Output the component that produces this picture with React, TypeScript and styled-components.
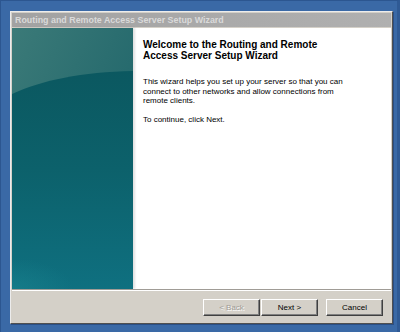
import React from 'react';
import styled, { createGlobalStyle } from 'styled-components';

const GlobalStyle = createGlobalStyle`
  html, body {
    margin: 0;
    padding: 0;
    background: #3a69a6;
  }
  * {
    box-sizing: border-box;
  }
`;

const Desktop = styled.div`
  width: 400px;
  height: 332px;
  padding: 10px 0 0 9px;
  background: #3a69a6;
  border-top: 1px solid #2c5690;
  border-left: 1px solid #2c5690;
  border-right: 3px solid #2f5a95;
  overflow: hidden;
`;

const Window = styled.div`
  width: 383px;
  height: 313px;
  display: flex;
  flex-direction: column;
  background: #d4d0c8;
  border-top: 1px solid #ececec;
  border-left: 1px solid #ececec;
  border-right: 1px solid #505050;
  border-bottom: 1px solid #505050;
  padding: 1px;
  box-shadow: 1px 1px 0 #2a4f86;
`;

const TitleBar = styled.div`
  height: 14px;
  flex-shrink: 0;
  display: flex;
  align-items: center;
  padding-left: 3px;
  background: linear-gradient(to right, #a2a2a2, #b0b0b0);
  color: #dadada;
  font-family: 'Liberation Sans', Arial, sans-serif;
  font-weight: bold;
  font-size: 8.9px;
  white-space: nowrap;
`;

const Main = styled.div`
  height: 261px;
  flex-shrink: 0;
  display: flex;
  background: #ffffff;
  margin-top: 1px;
`;

const Side = styled.div`
  width: 121px;
  flex-shrink: 0;
  overflow: hidden;
  box-shadow: 2px 0 2px rgba(0, 0, 0, 0.12);
`;

const Art = styled.svg`
  display: block;
  width: 121px;
  height: 261px;
`;

const Content = styled.div`
  flex: 1;
  padding: 11px 10px 0 10px;
  font-family: 'Liberation Sans', Arial, sans-serif;
  color: #000;
`;

const Heading = styled.h1`
  margin: 0 0 16px 0;
  font-size: 10px;
  line-height: 11px;
  font-weight: bold;
`;

const Para = styled.p`
  margin: 0 0 9px 0;
  font-size: 8px;
  line-height: 9.7px;
`;

const Separator = styled.div`
  height: 2px;
  flex-shrink: 0;
  border-top: 1px solid #a09c96;
  border-bottom: 1px solid #ffffff;
`;

const Footer = styled.div`
  flex: 1;
  display: flex;
  align-items: flex-start;
  justify-content: flex-end;
  padding: 8px 8px 0 0;
`;

const ButtonGroup = styled.div<{ $gap: number }>`
  display: flex;
  gap: ${(p) => p.$gap}px;
  margin-left: 8px;
`;

const Button = styled.button<{ $disabled?: boolean }>`
  width: 57px;
  height: 17px;
  padding: 0;
  background: #d4d0c8;
  border-top: 1px solid #ffffff;
  border-left: 1px solid #ffffff;
  border-right: 1px solid #404040;
  border-bottom: 1px solid #404040;
  box-shadow: inset -1px -1px 0 #808080;
  font-family: 'Liberation Sans', Arial, sans-serif;
  font-size: 8px;
  color: ${(p) => (p.$disabled ? '#a09c96' : '#000')};
  text-shadow: ${(p) => (p.$disabled ? '1px 1px 0 #fff' : 'none')};
`;

const SideArt: React.FC = () => (
  <Art viewBox="0 0 121 261" preserveAspectRatio="none">
    <defs>
      <linearGradient id="top" x1="0" y1="0" x2="1" y2="1">
        <stop offset="0" stopColor="#3b7a78" />
        <stop offset="1" stopColor="#175f66" />
      </linearGradient>
      <linearGradient id="low" x1="0" y1="0" x2="0" y2="1">
        <stop offset="0" stopColor="#0b5860" />
        <stop offset="0.45" stopColor="#0c616b" />
        <stop offset="1" stopColor="#0f7080" />
      </linearGradient>
      <radialGradient id="glow" cx="0" cy="1" r="0.5">
        <stop offset="0" stopColor="#1b8590" stopOpacity="0.55" />
        <stop offset="1" stopColor="#1b8590" stopOpacity="0" />
      </radialGradient>
    </defs>
    <rect x="0" y="0" width="121" height="261" fill="url(#top)" />
    <path d="M0 66 C 30 52, 70 44, 121 43 L121 261 L0 261 Z" fill="url(#low)" />
    <rect x="0" y="200" width="121" height="61" fill="url(#glow)" />
  </Art>
);

const App: React.FC = () => {
  return (
    <>
      <GlobalStyle />
      <Desktop>
        <Window>
          <TitleBar>Routing and Remote Access Server Setup Wizard</TitleBar>
          <Main>
            <Side>
              <SideArt />
            </Side>
            <Content>
              <Heading>
                Welcome to the Routing and Remote
                <br />
                Access Server Setup Wizard
              </Heading>
              <Para>
                This wizard helps you set up your server so that you can
                <br />
                connect to other networks and allow connections from
                <br />
                remote clients.
              </Para>
              <Para>To continue, click Next.</Para>
            </Content>
          </Main>
          <Separator />
          <Footer>
            <ButtonGroup $gap={1}>
              <Button $disabled>&lt; Back</Button>
              <Button>Next &gt;</Button>
            </ButtonGroup>
            <ButtonGroup $gap={0}>
              <Button>Cancel</Button>
            </ButtonGroup>
          </Footer>
        </Window>
      </Desktop>
    </>
  );
};

export default App;
